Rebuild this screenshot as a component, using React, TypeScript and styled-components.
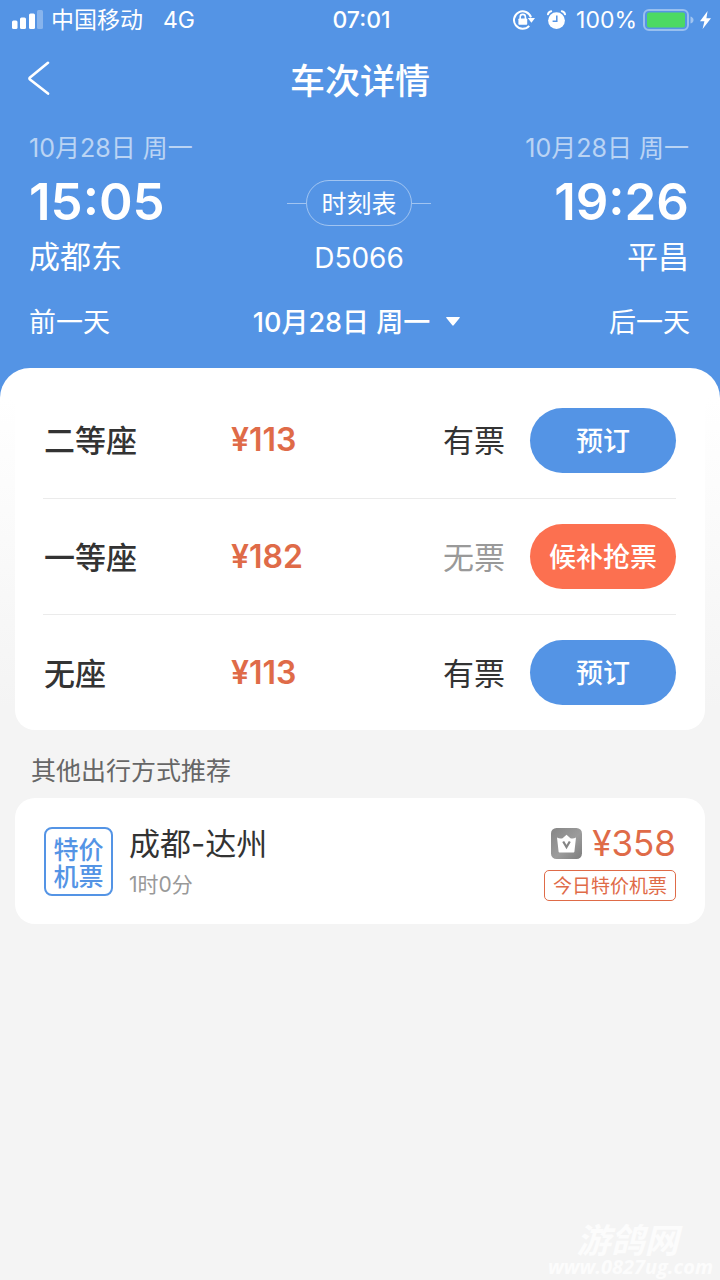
import React from 'react';
import styled, { createGlobalStyle } from 'styled-components';

const blue = '#5494e5';
const orange = '#df6b48';
const fontStack = 'Inter, "Noto Sans CJK SC", sans-serif';

const GlobalStyle = createGlobalStyle`
  *, *::before, *::after { box-sizing: border-box; }
  body { margin: 0; background: #f4f4f4; font-family: ${fontStack}; color: #333; }
  button { font: inherit; color: inherit; background: none; border: 0; padding: 0; cursor: pointer; }
  h1, h2, p, ul { margin: 0; padding: 0; font-weight: 400; }
  ul { list-style: none; }
  svg { display: block; flex: none; }
`;

const Page = styled.div`
  position: relative;
  min-height: 100vh;
`;

const Header = styled.header`
  background: ${blue};
  color: #fff;
  padding-bottom: 55px;
`;

const StatusBar = styled.div`
  display: grid;
  grid-template-columns: 1fr auto 1fr;
  align-items: center;
  height: 40px;
  padding: 0 9px 0 12px;
  font-size: 23px;
  line-height: 32px;
`;

const StatusGroup = styled.div<{ $end?: boolean }>`
  display: flex;
  align-items: center;
  justify-content: ${(p) => (p.$end ? 'flex-end' : 'flex-start')};
  gap: ${(p) => (p.$end ? '6px' : '8px')};
`;

const Network = styled.span`
  margin-left: 12px;
`;

const IconPair = styled.span`
  display: flex;
  gap: 12px;
  margin-right: 4px;
`;

const Clock = styled.time`
  font-weight: 500;
`;

const TitleBar = styled.div`
  display: grid;
  grid-template-columns: 64px 1fr 64px;
  align-items: center;
  height: 80px;
`;

const BackButton = styled.button`
  display: flex;
  justify-content: flex-end;
  width: 50px;
  height: 60px;
  padding-bottom: 5px;
  align-items: center;
`;

const Title = styled.h1`
  padding-top: 2px;
  font-size: 35px;
  line-height: 48px;
  font-weight: 500;
  text-align: center;
`;

const Trip = styled.section`
  display: grid;
  grid-template-columns: 1fr auto 1fr;
  padding: 8px 31px 0 29px;
`;

const Stop = styled.div<{ $end?: boolean }>`
  display: flex;
  flex-direction: column;
  align-items: ${(p) => (p.$end ? 'flex-end' : 'flex-start')};
`;

const StopDate = styled.span`
  font-size: 25px;
  line-height: 40px;
  opacity: 0.6;
`;

const StopTime = styled.time`
  font-size: 51px;
  line-height: 68px;
  font-weight: 600;
`;

const StopName = styled.span`
  font-size: 31px;
  line-height: 42px;
`;

const Middle = styled.div`
  display: flex;
  flex-direction: column;
  align-items: center;
  padding-top: 52px;
`;

const TimetableLine = styled.div`
  display: flex;
  align-items: center;
  &::before, &::after {
    content: '';
    width: 19px;
    height: 1px;
    background: rgba(255, 255, 255, 0.45);
  }
`;

const TimetableButton = styled.button`
  height: 46px;
  padding: 2px 14px 0;
  border: 1px solid rgba(255, 255, 255, 0.45);
  border-radius: 23px;
  font-size: 25px;
  line-height: 40px;
`;

const TrainNumber = styled.span`
  margin-top: 10px;
  font-size: 28px;
  line-height: 44px;
`;

const DayNav = styled.nav`
  display: grid;
  grid-template-columns: 1fr auto 1fr;
  align-items: center;
  padding: 23px 30px 0 29px;
`;

const DayButton = styled.button<{ $end?: boolean }>`
  justify-self: ${(p) => (p.$end ? 'end' : 'start')};
  font-size: 27px;
  line-height: 40px;
`;

const DatePicker = styled.button`
  display: flex;
  align-items: center;
  gap: 16px;
  padding-right: 6px;
  font-size: 27px;
  line-height: 40px;
  font-weight: 500;
  svg { margin-bottom: 4px; }
`;

const Sheet = styled.main`
  margin-top: -30px;
  padding: 0 15px;
  border-radius: 30px 30px 0 0;
  background: linear-gradient(#fff 30px, #f4f4f4 340px);
`;

const SeatCard = styled.ul`
  padding: 14px 29px 0 28px;
  border-radius: 20px;
  background: #fff;
`;

const SeatRow = styled.li`
  display: grid;
  grid-template-columns: 188px 1fr auto 146px;
  align-items: center;
  height: 116px;
  & + & { border-top: 1px solid #ebebeb; }
`;

const SeatName = styled.span`
  padding: 2px 0 0 1px;
  font-size: 31px;
  line-height: 44px;
  font-weight: 500;
`;

const SeatPrice = styled.span`
  font-size: 32px;
  line-height: 44px;
  font-weight: 600;
  color: ${orange};
`;

const SeatStatus = styled.span<{ $soldOut: boolean }>`
  margin-right: 25px;
  padding-top: 2px;
  font-size: 31px;
  line-height: 44px;
  color: ${(p) => (p.$soldOut ? '#999' : '#333')};
`;

const BookButton = styled.button<{ $waitlist: boolean }>`
  height: 65px;
  padding-top: 3px;
  border-radius: 33px;
  background: ${(p) => (p.$waitlist ? '#fc7050' : blue)};
  color: #fff;
  font-size: 27px;
  line-height: 40px;
  font-weight: 500;
`;

const SectionTitle = styled.h2`
  padding: 21px 16px 7px;
  font-size: 25px;
  line-height: 40px;
  color: #666;
`;

const OfferCard = styled.a`
  display: flex;
  height: 126px;
  padding: 22px 29px 0;
  border-radius: 20px;
  background: #fff;
  color: #333;
  text-decoration: none;
`;

const OfferBadge = styled.span`
  width: 69px;
  height: 69px;
  margin: 7px 16px 0 0;
  padding-top: 8px;
  border: 2px solid ${blue};
  border-radius: 8px;
  color: ${blue};
  font-size: 25px;
  line-height: 27px;
  font-weight: 500;
  text-align: center;
`;

const OfferText = styled.div`
  flex: 1;
  padding-top: 1px;
`;

const OfferRoute = styled.p`
  font-size: 31px;
  line-height: 46px;
`;

const OfferDuration = styled.p`
  font-size: 21px;
  line-height: 36px;
  color: #999;
`;

const OfferSide = styled.div`
  display: flex;
  flex-direction: column;
  align-items: flex-end;
`;

const OfferPrice = styled.div`
  display: flex;
  align-items: center;
  gap: 10px;
  font-size: 35px;
  line-height: 46px;
  color: ${orange};
`;

const OfferTag = styled.span`
  margin-top: 4px;
  height: 31px;
  padding: 0 8px;
  border: 1px solid ${orange};
  border-radius: 5px;
  font-size: 19px;
  line-height: 31px;
  color: ${orange};
`;

const Watermark = styled.div`
  position: absolute;
  right: 7px;
  bottom: 2px;
  display: flex;
  flex-direction: column;
  align-items: center;
  color: #fcfcfc;
  font-family: "Open Sans", "Noto Sans CJK SC", sans-serif;
  font-style: italic;
  font-weight: 700;
  font-size: 20px;
  line-height: 22px;
`;

const WatermarkName = styled.span`
  font-size: 34px;
  line-height: 32px;
  margin-right: 6px;
`;

function SignalIcon() {
  return (
    <svg width="31" height="20" viewBox="0 0 31 20" fill="#fff" aria-hidden="true">
      <rect x="0" y="10.500" width="5.500" height="8.500" rx="1.5" />
      <rect x="8" y="7.500" width="6" height="11.500" rx="1.5" />
      <rect x="17" y="3.500" width="6" height="15.500" rx="1.5" />
      <rect x="25" y="0" width="6" height="19" rx="1.5" opacity="0.3" />
    </svg>
  );
}

function RotationLockIcon() {
  return (
    <svg width="22" height="20" viewBox="0 0 22 20" fill="none" stroke="#fff" aria-hidden="true">
      <path d="M18 7.400A8.700 8.700 0 1 0 16.200 15.800" strokeWidth="2" />
      <path d="M14.800 8H22l-3.600 4.800z" fill="#fff" stroke="none" />
      <rect x="5.400" y="8.400" width="8.800" height="6.400" rx="0.8" fill="#fff" stroke="none" />
      <path d="M7.200 9V7a2.600 2.600 0 0 1 5.200 0V9" strokeWidth="1.600" />
    </svg>
  );
}

function AlarmIcon() {
  return (
    <svg width="19" height="20" viewBox="0 0 19 20" fill="none" aria-hidden="true">
      <circle cx="9.500" cy="10.600" r="8.400" fill="#fff" />
      <path d="M1 4.200Q1.600 1.600 4.200 1.200M18 4.200q-.6-2.600-3.200-3" stroke="#fff" strokeWidth="2" strokeLinecap="round" />
      <path d="M9.800 5.600v5.600H5.600" stroke={blue} strokeWidth="1.500" />
    </svg>
  );
}

function BatteryIcon() {
  return (
    <svg width="51" height="22" viewBox="0 0 51 22" aria-hidden="true">
      <rect x="1" y="1" width="44" height="20" rx="5" fill="none" stroke="#fff" strokeOpacity="0.4" strokeWidth="2" />
      <rect x="4" y="3.500" width="38" height="15" rx="2" fill="#4cd964" />
      <path d="M47.5 7.500q3 1 3 3.500t-3 3.500z" fill="#fff" fillOpacity="0.45" />
    </svg>
  );
}

function BoltIcon() {
  return (
    <svg width="11" height="18" viewBox="0 0 11 18" fill="#fff" aria-hidden="true">
      <path d="M7.600 0 0 10.200h4.400L2.600 18 11 7.200H6.400z" />
    </svg>
  );
}

function BackIcon() {
  return (
    <svg width="22" height="34" viewBox="0 0 22 34" fill="none" stroke="#fff" strokeWidth="2.6" strokeLinecap="round" strokeLinejoin="round" aria-hidden="true">
      <path d="M20 1.800 2 16.500q-1 1 0 2L20 32.600" />
    </svg>
  );
}

function CaretIcon() {
  return (
    <svg width="14" height="9" viewBox="0 0 14 9" fill="#fff" aria-hidden="true">
      <path d="M.6 0h12.800q.8.200.2.900L7.700 8.300q-.7.700-1.400 0L.4.900Q-.2.200.6 0z" />
    </svg>
  );
}

function CrownIcon() {
  return (
    <svg width="31" height="31" viewBox="0 0 31 31" aria-hidden="true">
      <defs>
        <linearGradient id="crownFill" x1="0" y1="0" x2="1" y2="1">
          <stop offset="0" stopColor="#858585" />
          <stop offset="0.55" stopColor="#9c9c9c" />
          <stop offset="1" stopColor="#7d7d7d" />
        </linearGradient>
      </defs>
      <rect width="31" height="31" rx="5.500" fill="url(#crownFill)" />
      <path d="M6 9.500q2.800 1.600 5.600.700L15.500 6.800l3.900 3.400q2.800.9 5.600-.7l-1.600 14.300q-.1.700-.8.700H8.400q-.7 0-.8-.7z" fill="#fff" />
      <path d="m12.200 13.500 3.300 5.500 3.300-5.500" fill="none" stroke="#858585" strokeWidth="2.200" />
    </svg>
  );
}

const seats = [
  { name: '二等座', price: '¥113', available: true },
  { name: '一等座', price: '¥182', available: false },
  { name: '无座', price: '¥113', available: true },
];

export default function App() {
  return (
    <Page>
      <GlobalStyle />
      <Header>
        <StatusBar>
          <StatusGroup>
            <SignalIcon />
            <span>中国移动</span>
            <Network>4G</Network>
          </StatusGroup>
          <Clock>07:01</Clock>
          <StatusGroup $end>
            <IconPair>
              <RotationLockIcon />
              <AlarmIcon />
            </IconPair>
            <span>100%</span>
            <BatteryIcon />
            <BoltIcon />
          </StatusGroup>
        </StatusBar>
        <TitleBar>
          <BackButton aria-label="返回">
            <BackIcon />
          </BackButton>
          <Title>车次详情</Title>
        </TitleBar>
        <Trip>
          <Stop>
            <StopDate>10月28日 周一</StopDate>
            <StopTime>15:05</StopTime>
            <StopName>成都东</StopName>
          </Stop>
          <Middle>
            <TimetableLine>
              <TimetableButton>时刻表</TimetableButton>
            </TimetableLine>
            <TrainNumber>D5066</TrainNumber>
          </Middle>
          <Stop $end>
            <StopDate>10月28日 周一</StopDate>
            <StopTime>19:26</StopTime>
            <StopName>平昌</StopName>
          </Stop>
        </Trip>
        <DayNav>
          <DayButton>前一天</DayButton>
          <DatePicker>
            10月28日 周一
            <CaretIcon />
          </DatePicker>
          <DayButton $end>后一天</DayButton>
        </DayNav>
      </Header>
      <Sheet>
        <SeatCard>
          {seats.map((seat) => (
            <SeatRow key={seat.name}>
              <SeatName>{seat.name}</SeatName>
              <SeatPrice>{seat.price}</SeatPrice>
              <SeatStatus $soldOut={!seat.available}>{seat.available ? '有票' : '无票'}</SeatStatus>
              <BookButton $waitlist={!seat.available}>{seat.available ? '预订' : '候补抢票'}</BookButton>
            </SeatRow>
          ))}
        </SeatCard>
        <SectionTitle>其他出行方式推荐</SectionTitle>
        <OfferCard href="#flight">
          <OfferBadge>特价<br />机票</OfferBadge>
          <OfferText>
            <OfferRoute>成都-达州</OfferRoute>
            <OfferDuration>1时0分</OfferDuration>
          </OfferText>
          <OfferSide>
            <OfferPrice>
              <CrownIcon />
              <span>¥358</span>
            </OfferPrice>
            <OfferTag>今日特价机票</OfferTag>
          </OfferSide>
        </OfferCard>
      </Sheet>
      <Watermark>
        <WatermarkName>游鸽网</WatermarkName>
        <span>www.0827ug.com</span>
      </Watermark>
    </Page>
  );
}
